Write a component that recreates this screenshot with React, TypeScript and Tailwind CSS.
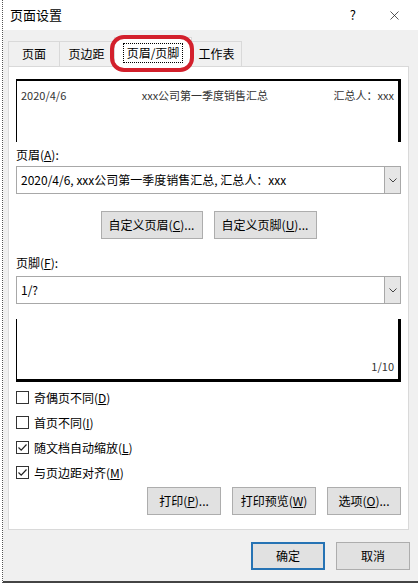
import React from "react";
import { X } from "lucide-react";

const font = { fontFamily: '"Noto Sans CJK SC", "Noto Sans", sans-serif' };

function Select({ value }: { value: string }) {
  return (
    <div className="flex h-[28px] w-full border border-[#a8a8a8] bg-white">
      <div className="flex flex-1 items-center pl-[4px] text-[12px] text-black">{value}</div>
      <div className="flex w-[16px] items-center justify-center border-l border-[#a8a8a8] bg-[#e6e6e6]">
        <svg width="8" height="5" viewBox="0 0 8 5">
          <polyline points="0.5,0.5 4,4 7.5,0.5" fill="none" stroke="#444" strokeWidth="1" />
        </svg>
      </div>
    </div>
  );
}

function Btn({ children, w, primary }: { children: React.ReactNode; w: string; primary?: boolean }) {
  return (
    <div
      className={
        "flex h-[28px] items-center justify-center bg-[#e1e1e1] text-[12px] text-black " +
        w +
        (primary ? " border-2 border-[#2673b4]" : " border border-[#adadad]")
      }
    >
      {children}
    </div>
  );
}

function Check({ checked, children }: { checked?: boolean; children: React.ReactNode }) {
  return (
    <div className="flex h-[25px] items-center gap-[5px] text-[12px] text-black">
      <div className="flex h-[13px] w-[13px] items-center justify-center border border-[#333] bg-white">
        {checked && (
          <svg width="11" height="11" viewBox="0 0 11 11">
            <polyline points="1.5,5.5 4.2,8.2 9.5,2.5" fill="none" stroke="#222" strokeWidth="1.2" />
          </svg>
        )}
      </div>
      <span>{children}</span>
    </div>
  );
}

export default function App() {
  return (
    <div className="flex h-[583px] w-[418px] overflow-hidden bg-white" style={font}>
      <div className="w-[3px] border-r border-dotted border-[#555] bg-white" />
      <div className="flex flex-1 flex-col">
        <div className="flex h-[30px] items-center bg-white pl-[7px] pr-[16px] text-[13px] text-black">
          <span className="flex-1">页面设置</span>
          <span className="mr-[31px] text-[13px]">?</span>
          <X size={15} strokeWidth={1.2} color="#222" />
        </div>
        <div className="flex flex-1 flex-col bg-[#f0f0f0] pl-[5px] pr-[9px] pt-[7px]">
          <div className="relative flex h-[29px] items-end text-[12px] text-black">
            <div className="flex h-[25px] w-[52px] items-center justify-center border border-b-0 border-[#d9d9d9]">页面</div>
            <div className="flex h-[25px] w-[54px] items-center justify-center border border-b-0 border-l-0 border-[#d9d9d9]">页边距</div>
            <div className="z-10 -mb-px flex h-[30px] w-[78px] items-center justify-center border border-b-0 border-[#d9d9d9] bg-white">
              <span className="border border-dotted border-black px-[3px] py-[1px] leading-[16px]">页眉/页脚</span>
            </div>
            <div className="flex h-[25px] w-[50px] items-center justify-center border border-b-0 border-l-0 border-[#d9d9d9]">工作表</div>
            <div className="pointer-events-none absolute left-[102px] top-[-2px] z-20 h-[37px] w-[84px] rounded-[14px] border-[4px] border-[#d3202c]" />
          </div>
          <div className="flex h-[464px] flex-col border border-[#d9d9d9] bg-white px-[7px] pt-[12px]">
            <div className="flex h-[63px] border-l border-r-[3px] border-t-2 border-black px-[4px] pt-[5px] text-[11px] text-[#333]">
              <div className="flex h-[18px] w-full items-center justify-between">
                <span>2020/4/6</span>
                <span className="ml-[10px]">xxx公司第一季度销售汇总</span>
                <span>汇总人：xxx</span>
              </div>
            </div>
            <div className="mt-[3px] h-[20px] text-[12px] leading-[20px] text-black">
              页眉(<u>A</u>):
            </div>
            <div className="mt-[1px]">
              <Select value="2020/4/6, xxx公司第一季度销售汇总, 汇总人：xxx" />
            </div>
            <div className="mt-[17px] flex justify-center gap-[11px]">
              <Btn w="w-[102px]">
                自定义页眉(<u>C</u>)...
              </Btn>
              <Btn w="w-[103px]">
                自定义页脚(<u>U</u>)...
              </Btn>
            </div>
            <div className="mt-[14px] h-[20px] text-[12px] leading-[20px] text-black">
              页脚(<u>F</u>):
            </div>
            <div className="mt-[3px]">
              <Select value="1/?" />
            </div>
            <div className="mt-[15px] flex h-[63px] items-end justify-end border-b-[3px] border-l border-r-[3px] border-black pb-[5px] pr-[4px] text-[11px] text-[#333]">
              1/10
            </div>
            <div className="mt-[3px] flex flex-col">
              <Check>
                奇偶页不同(<u>D</u>)
              </Check>
              <Check>
                首页不同(<u>I</u>)
              </Check>
              <Check checked>
                随文档自动缩放(<u>L</u>)
              </Check>
              <Check checked>
                与页边距对齐(<u>M</u>)
              </Check>
            </div>
            <div className="mt-[2px] flex justify-end gap-[11px]">
              <Btn w="w-[74px]">
                打印(<u>P</u>)...
              </Btn>
              <Btn w="w-[84px]">
                打印预览(<u>W</u>)
              </Btn>
              <Btn w="w-[74px]">
                选项(<u>O</u>)...
              </Btn>
            </div>
          </div>
          <div className="-mr-[1px] mt-[12px] flex justify-end gap-[11px]">
            <Btn w="w-[74px]" primary>
              确定
            </Btn>
            <Btn w="w-[74px]">取消</Btn>
          </div>
        </div>
        <div className="h-[2px] bg-[#444]" />
      </div>
    </div>
  );
}
